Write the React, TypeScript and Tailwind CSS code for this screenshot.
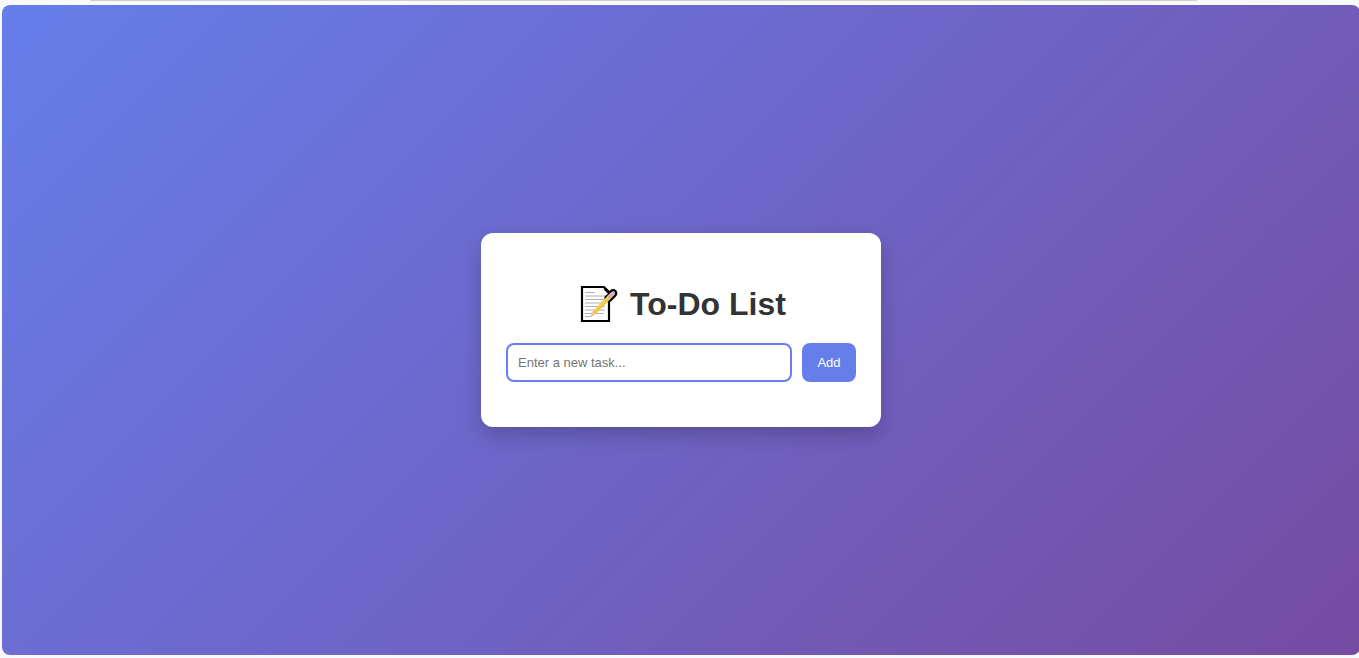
import { useState } from "react";
import type { FormEvent } from "react";

function MemoIcon() {
  return (
    <svg viewBox="0 0 38 38" className="h-[38px] w-[38px] shrink-0" aria-hidden="true">
      <path d="M2 2H24L29 7V36H2Z" fill="#fff" stroke="#000" strokeWidth="2.2" />
      <path d="M23.5 1L30 7.5V13H28L24.5 8.5Z" fill="#000" />
      <path d="M28.5 13L33.2 8.2" stroke="#000" strokeWidth="8.4" strokeLinecap="round" />
      <path d="M22.5 3.2L28 8.8L22 13H20V3.2Z" fill="#fff" />
      <path
        d="M5 7.5H15M5 11H25M5 14.5H24M5 18H24M5 21.5H25M5 25H25M5 28.5H24"
        stroke="#b0b0b0"
        strokeWidth="1.1"
      />
      <path d="M5 31.5H9.5C11 31.5 12 31 13 30" fill="none" stroke="#b0b0b0" strokeWidth="1.1" />
      <path d="M11.5 30.5L13 26L27.8 10.6L31 13.6L16 29Z" fill="#f8ca52" />
      <path d="M15.3 28L30 13" stroke="#eab54a" strokeWidth="0.8" />
      <path d="M11.5 30.5L13 26L16 29Z" fill="#e5c49b" />
      <path d="M27.5 10.8L31.3 7C33.6 4.8 36.6 7.8 34.4 10L30.8 13.8Z" fill="#d8b0b5" />
    </svg>
  );
}

export default function App() {
  const [task, setTask] = useState("");
  const [tasks, setTasks] = useState<string[]>([]);

  function addTask(event: FormEvent) {
    event.preventDefault();
    const text = task.trim();
    if (!text) return;
    setTasks([...tasks, text]);
    setTask("");
  }

  return (
    <div className="flex min-h-screen flex-col overflow-hidden bg-[#f8f9fc] pb-[3px] pl-[2px] font-['Liberation_Sans',Arial,sans-serif]">
      <div className="mr-[162px] mb-1 ml-[88px] h-px bg-[#cfcfcf]" />
      <main className="-mr-px flex grow items-center justify-center rounded-lg bg-[linear-gradient(135deg,#667eea,#764ba2)]">
        <section className="w-[400px] rounded-xl bg-white px-[25px] pt-[51px] pb-[45px] shadow-[0_8px_20px_rgba(0,0,0,0.2)]">
          <h1 className="mb-[19px] flex h-10 items-center justify-center gap-3 pl-1 text-[32px] leading-10 font-bold text-[#333]">
            <MemoIcon />
            To-Do List
          </h1>
          <form onSubmit={addTask} className="flex gap-2.5">
            <input
              type="text"
              aria-label="New task"
              placeholder="Enter a new task..."
              value={task}
              onChange={(event) => setTask(event.target.value)}
              className="h-[39px] min-w-0 grow rounded-lg border-2 border-[#667eea] px-2.5 text-[13px] text-black outline-none placeholder:text-[#757575]"
            />
            <button
              type="submit"
              className="h-[39px] w-[54px] cursor-pointer rounded-lg bg-[#667eea] text-[13px] text-white"
            >
              Add
            </button>
          </form>
          {tasks.length > 0 && (
            <ul className="mt-5 flex flex-col gap-2 text-sm text-[#333]">
              {tasks.map((item, index) => (
                <li key={index}>{item}</li>
              ))}
            </ul>
          )}
        </section>
      </main>
    </div>
  );
}
